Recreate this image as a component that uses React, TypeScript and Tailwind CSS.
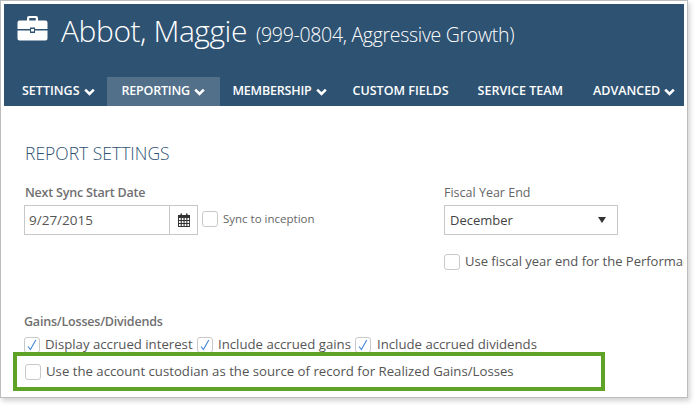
function Briefcase() {
    return (
        <svg width="31" height="26" viewBox="0 0 31 26" className="shrink-0">
            <path d="M10 6V3a2 2 0 0 1 2-2h7a2 2 0 0 1 2 2v3h-2.2V3.4a.4.4 0 0 0-.4-.4h-5.800a.4.4 0 0 0-.4.4V6z" fill="#fff" />
            <path d="M2.500 5.500h26a2 2 0 0 1 2 2v6.500H18v-1.500h-5V14H.5V7.500a2 2 0 0 1 2-2z" fill="#fff" />
            <path d="M.5 15.500H13v2.500h5v-2.500h12.500v8a2 2 0 0 1-2 2h-26a2 2 0 0 1-2-2z" fill="#fff" />
            <rect x="14" y="14" width="3" height="2.500" fill="#fff" />
        </svg>
    );
}

function Calendar() {
    return (
        <svg width="12" height="14" viewBox="0 0 12 14">
            <path d="M0 2h12v12H0z" fill="#333" />
            <path d="M2.500 0.500h1.500v2.500H2.500zM8 0.500h1.500v2.500H8z" fill="#333" />
            {[5, 8, 11].map((y) =>
                [1, 3.800, 6.600, 9.400].map((x) => (
                    <rect key={`${x}-${y}`} x={x} y={y} width="1.700" height="2" fill="#fff" />
                ))
            )}
        </svg>
    );
}

function Check({ checked = false }: { checked?: boolean }) {
    return (
        <span className="flex w-[16px] h-[16px] shrink-0 items-center justify-center rounded-[3px] border border-[#c9c9c9] bg-white">
            {checked && (
                <svg width="10" height="12" viewBox="0 0 10 12" fill="none">
                    <path d="M1 7.500 3.400 10.500 8.800 1" stroke="#3f87d6" strokeWidth="1.100" />
                </svg>
            )}
        </span>
    );
}

function Chevron() {
    return (
        <svg width="11" height="8" viewBox="0 0 11 8" fill="none" className="shrink-0">
            <path d="M1.200 1.600 5.500 5.900 9.800 1.600" stroke="#fff" strokeWidth="2.600" />
        </svg>
    );
}

function NavItem({ label, menu, className }: { label: string; menu?: boolean; className: string }) {
    return (
        <div className={`flex h-full items-center gap-[4px] ${className}`}>
            <span>{label}</span>
            {menu && <Chevron />}
        </div>
    );
}

function App() {
    return (
        <div className="w-[697px] h-[408px] bg-white overflow-hidden font-['Open_Sans',sans-serif]">
            <div className="w-[688px] h-[398px] border border-[#bdbdbd] p-[3px] shadow-[2px_3px_5px_rgba(0,0,0,0.18)] overflow-hidden">
                <div className="h-[102px] bg-[#2e5272] text-white">
                    <div className="flex h-[73px] items-start pl-[13px] pt-[11px]">
                        <Briefcase />
                        <span className="ml-[13px] text-[30px] leading-[32px] font-light tracking-[-0.45px]">Abbot, Maggie</span>
                        <span className="ml-[9px] mt-[7px] text-[19.500px] leading-[26px] font-light tracking-[-0.3px]">(999-0804, Aggressive Growth)</span>
                    </div>
                    <div className="flex h-[29px] items-center pl-[3px] text-[12.500px] font-semibold">
                        <NavItem label="SETTINGS" menu className="pl-[15px] pr-[12px]" />
                        <NavItem label="REPORTING" menu className="w-[113px] pl-[15px] bg-[#527089] tracking-[-0.2px]" />
                        <NavItem label="MEMBERSHIP" menu className="pl-[13px] tracking-[-0.2px]" />
                        <NavItem label="CUSTOM FIELDS" className="pl-[26px]" />
                        <NavItem label="SERVICE TEAM" className="pl-[29px]" />
                        <NavItem label="ADVANCED" menu className="pl-[30px]" />
                    </div>
                </div>

                <div className="pl-[20px] text-[#4a4a4a]">
                    <h2 className="mt-[35px] pl-[1px] text-[17.500px] leading-[24px] font-light text-[#2e5272]">REPORT SETTINGS</h2>

                    <div className="mt-[19px] flex h-[130px]">
                        <div className="w-[420px]">
                            <div className="pl-[1px] text-[12.500px] leading-[18px] font-semibold text-[#707070] tracking-[-0.2px]">Next Sync Start Date</div>
                            <div className="mt-[3px] flex items-start">
                                <div className="flex w-[174px] h-[30px] border border-[#c8c8c8]">
                                    <div className="flex-1 pl-[4px] text-[13.500px] leading-[28px] text-[#555]">9/27/2015</div>
                                    <div className="flex w-[28px] items-center justify-center border-l border-[#c8c8c8]">
                                        <Calendar />
                                    </div>
                                </div>
                                <div className="ml-[4px] mt-[5px] flex items-center gap-[5px] text-[11.500px] text-[#666]">
                                    <Check />
                                    <span>Sync to inception</span>
                                </div>
                            </div>
                        </div>
                        <div className="flex-1 overflow-hidden">
                            <div className="text-[12.500px] leading-[18px] text-[#666]">Fiscal Year End</div>
                            <div className="mt-[3px] flex w-[174px] h-[30px] items-center justify-between border border-[#c8c8c8] pl-[5px] pr-[11px] text-[13px] text-[#444]">
                                <span className="pt-[1px]">December</span>
                                <span className="h-0 w-0 border-x-[4px] border-t-[6px] border-x-transparent border-t-[#333]" />
                            </div>
                            <div className="mt-[17px] flex items-center gap-[5px] whitespace-nowrap text-[13px] text-[#555]">
                                <Check />
                                <span>Use fiscal year end for the Performance</span>
                            </div>
                        </div>
                    </div>

                    <div className="mt-[-1px] text-[12.500px] leading-[18px] font-semibold text-[#707070] tracking-[-0.2px]">Gains/Losses/Dividends</div>
                    <div className="mt-[6px] flex h-[16px] items-center text-[13.200px] text-[#555]">
                        <Check checked />
                        <span className="ml-[5px] w-[152px]">Display accrued interest</span>
                        <Check checked />
                        <span className="ml-[5px] w-[137px]">Include accrued gains</span>
                        <Check checked />
                        <span className="ml-[6px]">Include accrued dividends</span>
                    </div>
                    <div className="relative ml-[-11px] mt-[-1px] flex h-[39px] w-[592px] items-center gap-[5px] border-[4px] border-[#5ea226] pl-[8px] text-[13.200px] text-[#555]">
                        <Check />
                        <span>Use the account custodian as the source of record for Realized Gains/Losses</span>
                    </div>
                </div>
            </div>
        </div>
    );
}

export default App;
